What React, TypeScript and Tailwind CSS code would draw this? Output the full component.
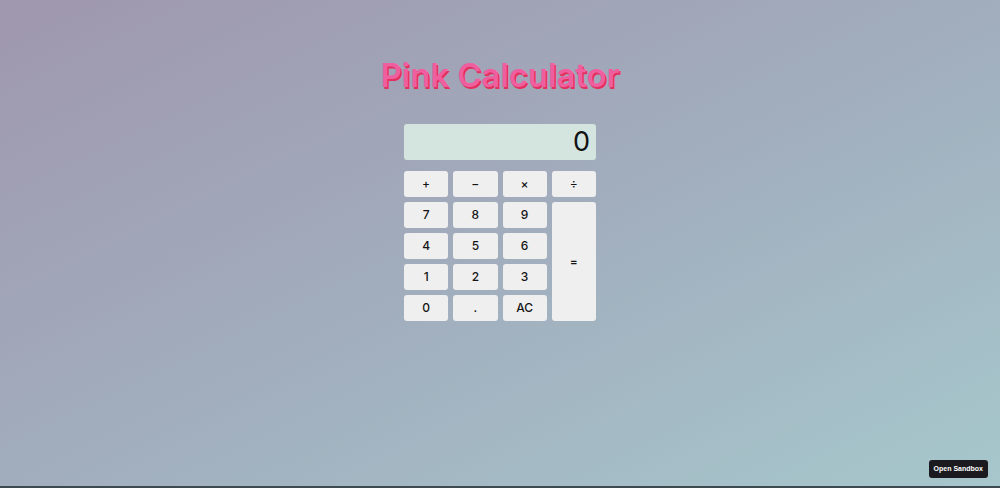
const keys = [
  { label: "+", cls: "" },
  { label: "−", cls: "" },
  { label: "×", cls: "" },
  { label: "÷", cls: "" },
  { label: "7", cls: "" },
  { label: "8", cls: "" },
  { label: "9", cls: "" },
  { label: "=", cls: "row-span-4" },
  { label: "4", cls: "" },
  { label: "5", cls: "" },
  { label: "6", cls: "" },
  { label: "1", cls: "" },
  { label: "2", cls: "" },
  { label: "3", cls: "" },
  { label: "0", cls: "" },
  { label: ".", cls: "" },
  { label: "AC", cls: "" },
];

export default function App() {
  return (
    <div className="relative flex h-[488px] w-full flex-col items-center overflow-hidden border-b-2 border-[#3d4b50] bg-gradient-to-br from-[#9f97ad] via-[#a1adbd] to-[#a6c7cc] font-['Inter','Noto_Sans',sans-serif]">
      <h1 className="mt-[55px] text-[33px] font-semibold leading-[40px] tracking-[-0.1px] text-[#ef5fa0] [text-shadow:1.5px_1.5px_0_#e2305f]">
        Pink Calculator
      </h1>

      <div className="mt-[29px] w-[192px]">
        <div className="flex h-[36px] items-center justify-end rounded-[3px] bg-[#d4e4df] px-[6px] text-[27px] text-[#111]">
          0
        </div>
        <div className="mt-[11px] grid grid-cols-4 grid-rows-[26px_26px_26px_26px_26px] gap-x-[5px] gap-y-[5px]">
          {keys.map((k) => (
            <button
              key={k.label}
              className={`flex items-center justify-center rounded-[3px] bg-[#efefef] text-[12px] font-medium text-[#151515] ${k.cls}`}
            >
              {k.label}
            </button>
          ))}
        </div>
      </div>

      <button className="absolute bottom-[8px] right-[12px] h-[18px] rounded-[3px] bg-[#1b1b1f] px-[5px] font-['Liberation_Sans',sans-serif] text-[7px] font-bold text-white">
        Open Sandbox
      </button>
    </div>
  );
}
